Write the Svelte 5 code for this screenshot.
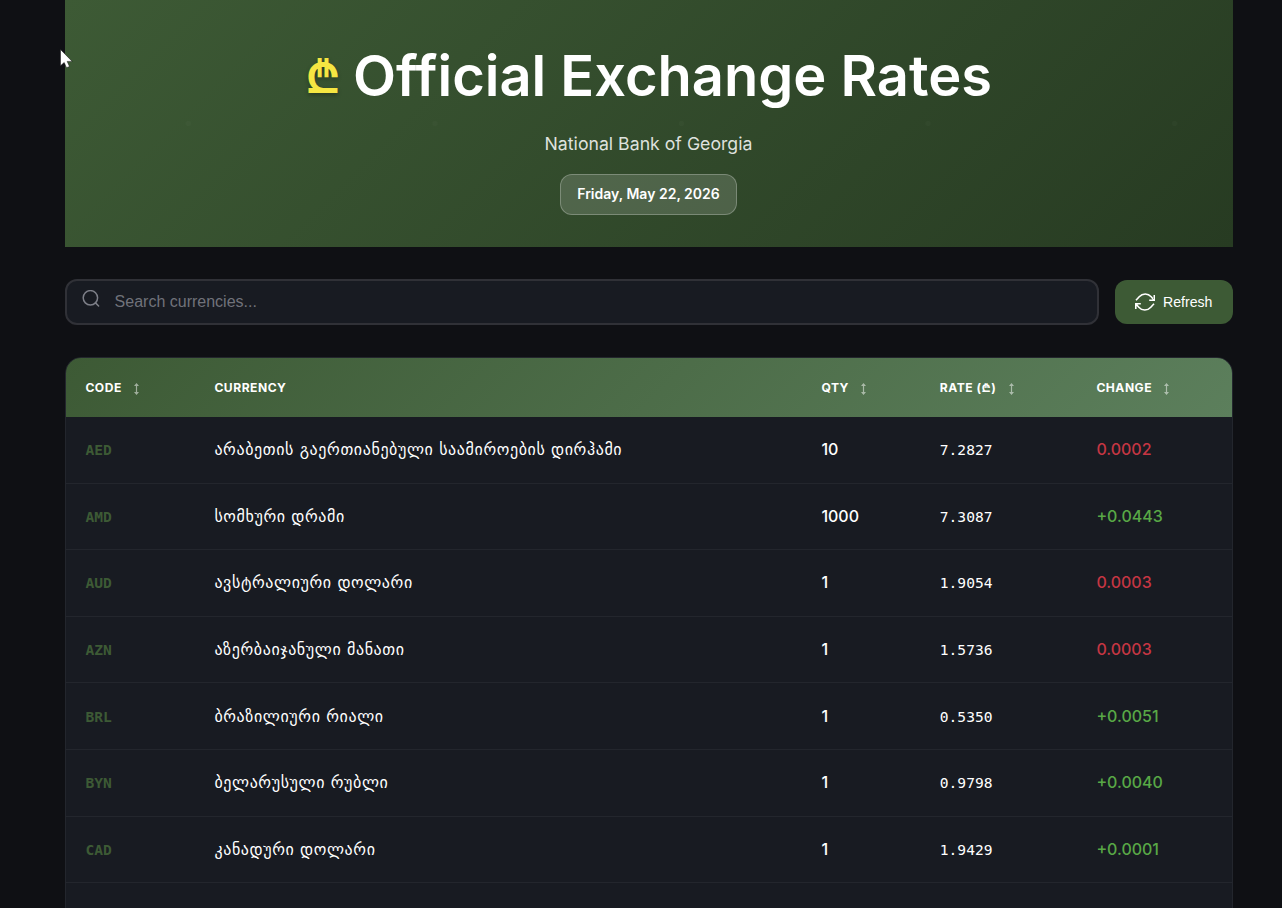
<script>
	let search = $state('');
	let sortKey = $state('');
	let ascending = $state(true);

	const columns = [
		{ key: 'code', label: 'Code', sortable: true },
		{ key: 'name', label: 'Currency', sortable: false },
		{ key: 'quantity', label: 'Qty', sortable: true },
		{ key: 'rate', label: 'Rate (₾)', sortable: true },
		{ key: 'diff', label: 'Change', sortable: true }
	];

	const currencies = [
		{ code: 'AED', name: 'არაბეთის გაერთიანებული საამიროების დირჰამი', quantity: 10, rate: 7.2827, diff: -0.0002 },
		{ code: 'AMD', name: 'სომხური დრამი', quantity: 1000, rate: 7.3087, diff: 0.0443 },
		{ code: 'AUD', name: 'ავსტრალიური დოლარი', quantity: 1, rate: 1.9054, diff: -0.0003 },
		{ code: 'AZN', name: 'აზერბაიჯანული მანათი', quantity: 1, rate: 1.5736, diff: -0.0003 },
		{ code: 'BRL', name: 'ბრაზილიური რიალი', quantity: 1, rate: 0.535, diff: 0.0051 },
		{ code: 'BYN', name: 'ბელარუსული რუბლი', quantity: 1, rate: 0.9798, diff: 0.004 },
		{ code: 'CAD', name: 'კანადური დოლარი', quantity: 1, rate: 1.9429, diff: 0.0001 }
	];

	let rows = $derived.by(() => {
		const term = search.toLowerCase();
		const found = currencies.filter(c => c.code.toLowerCase().includes(term) || c.name.includes(term));
		if (sortKey) {
			found.sort((a, b) => (a[sortKey] > b[sortKey] ? 1 : -1) * (ascending ? 1 : -1));
		}
		return found;
	});

	function sortBy(column) {
		if (!column.sortable) return;
		ascending = sortKey === column.key ? !ascending : true;
		sortKey = column.key;
	}

	function refresh() {
		search = '';
		sortKey = '';
	}
</script>

<div class="container">
	<header>
		<h1><span class="lari">₾</span><span class="heading">Official Exchange Rates</span></h1>
		<p class="subtitle">National Bank of Georgia</p>
		<div class="date">Friday, May 22, 2026</div>
	</header>

	<div class="controls">
		<div class="search">
			<svg width="18" height="18" viewBox="0 0 18 18" fill="none" stroke="currentColor" stroke-width="1.5">
				<circle cx="8.4" cy="7.8" r="7.2" />
				<path d="M13.5 12.9l3.1 3.1" stroke-linecap="round" />
			</svg>
			<input type="text" placeholder="Search currencies..." bind:value={search}>
		</div>
		<button class="refresh" onclick={refresh}>
			<svg width="20" height="18" viewBox="0 0 20 18" fill="none" stroke="currentColor" stroke-width="1.6">
				<path d="M1 7.3L4.2 3.8C7.6.1 12.9.1 16.2 3.8L18.8 6.8M19.3 2V7.2H14.2" />
				<path d="M19 10.7L15.8 14.2C12.4 17.9 7.1 17.9 3.8 14.2L1.2 11.2M.8 16V10.8H5.8" />
			</svg>
			<span>Refresh</span>
		</button>
	</div>

	<div class="table-wrap">
		<table>
			<colgroup>
				<col class="col-code">
				<col class="col-name">
				<col class="col-qty">
				<col class="col-rate">
				<col class="col-change">
			</colgroup>
			<thead>
				<tr>
					{#each columns as column (column.key)}
						<th onclick={() => sortBy(column)}>
							<span class="label">{column.label}</span>
							{#if column.sortable}
								<svg class="sort" width="7" height="12" viewBox="0 0 7 12">
									<path d="M3.5 1.5v9" stroke="currentColor" stroke-width="1.2" />
									<path d="M3.5 0L6 3H1zM3.5 12L6 9H1z" fill="currentColor" />
								</svg>
							{/if}
						</th>
					{/each}
				</tr>
			</thead>
			<tbody>
				{#each rows as row (row.code)}
					<tr>
						<td class="code">{row.code}</td>
						<td class="name">{row.name}</td>
						<td class="qty">{row.quantity}</td>
						<td class="rate">{row.rate.toFixed(4)}</td>
						<td class="change" class:down={row.diff < 0}>
							{row.diff > 0 ? '+' : ''}{Math.abs(row.diff).toFixed(4)}
						</td>
					</tr>
				{/each}
			</tbody>
		</table>
	</div>
</div>

<svg class="cursor" width="13" height="20" viewBox="0 0 13 20">
	<path d="M.5.5v16.2l3.7-3.2 2.3 5.2 3-1.2-2.3-5.1h5z" fill="#fff" stroke="#111" stroke-width=".5" />
</svg>

<style>
	:global(body) {
		background: #0f1014;
		overflow: hidden;
	}

	.container {
		width: 1168px;
		height: 908px;
		margin-left: 65px;
		font-family: Inter, "DejaVu Sans", sans-serif;
		color: #fff;
	}

	header {
		box-sizing: border-box;
		height: 246.6px;
		padding: 43px 1px 0 0;
		text-align: center;
		background:
			radial-gradient(circle, rgba(255, 255, 255, 0.018) 2.4px, transparent 3px) 0 0 / 246.6px 246.6px,
			linear-gradient(135deg, #3d5a35 0%, #273b22 100%);
	}

	h1 {
		display: flex;
		justify-content: center;
		gap: 12px;
		margin: 0;
		font-size: 56px;
		font-weight: 600;
		line-height: 67px;
	}

	.lari {
		color: #f5e642;
		font-size: 48px;
		font-weight: 600;
		line-height: 66px;
		text-shadow: 0 2px 4px rgba(0, 0, 0, 0.3);
	}

	.subtitle {
		margin: 19px 0 16px;
		font-size: 17.7px;
		line-height: 29px;
		color: rgba(255, 255, 255, 0.85);
	}

	.date {
		display: inline-block;
		padding: 7px 16px 9px;
		border: 1px solid rgba(255, 255, 255, 0.25);
		border-radius: 12px;
		background: rgba(255, 255, 255, 0.15);
		font-size: 14px;
		font-weight: 600;
		line-height: 23px;
	}

	.controls {
		display: flex;
		align-items: center;
		gap: 16px;
		margin: 32.4px 0;
	}

	.search {
		display: flex;
		box-sizing: border-box;
		flex: 1;
		height: 46px;
		padding-left: 15px;
		border: 2px solid #303137;
		border-radius: 12px;
		background: #181b22;
		color: #7d7f88;
	}

	.search svg {
		margin-top: 9px;
	}

	input {
		flex: 1;
		margin-left: 14.6px;
		padding: 0;
		border: 0;
		outline: 0;
		background: none;
		color: #fff;
		font: 16px "Liberation Sans", sans-serif;
	}

	input::placeholder {
		color: #70727a;
	}

	.refresh {
		display: flex;
		align-items: center;
		gap: 8px;
		width: 118px;
		height: 44px;
		padding: 0 0 0 20px;
		border: 0;
		border-radius: 12px;
		background: #3d5a35;
		color: #fff;
		font: 14.1px "Liberation Sans", sans-serif;
	}

	.table-wrap {
		box-sizing: border-box;
		height: 560px;
		overflow: hidden;
		border: 1px solid #23262d;
		border-radius: 16px 16px 0 0;
		background: #181b22;
	}

	table {
		width: 100%;
		table-layout: fixed;
		border-collapse: separate;
		border-spacing: 0;
	}

	.col-code { width: 129px; }
	.col-name { width: 607px; }
	.col-qty { width: 118.4px; }
	.col-rate { width: 156.6px; }

	thead {
		background: linear-gradient(135deg, #3d5a35, #5c7f5c);
	}

	th {
		height: 58.6px;
		padding: 0 0 0 19.4px;
		font-size: 12.1px;
		font-weight: 700;
		letter-spacing: 0.5px;
		text-align: left;
		text-transform: uppercase;
		white-space: nowrap;
	}

	.sort {
		margin-left: 8px;
		vertical-align: -3px;
		opacity: 0.5;
	}

	td {
		box-sizing: border-box;
		height: 66.6px;
		padding: 0 0 0 19.4px;
		border-bottom: 1px solid #23262d;
		font-size: 16px;
	}

	.code {
		color: #3d5a35;
		font-family: "DejaVu Sans Mono", monospace;
		font-size: 14.6px;
		font-weight: 700;
	}

	.name {
		font-family: "DejaVu Sans", sans-serif;
		font-size: 16px;
		letter-spacing: 0.6px;
	}

	.qty,
	.change {
		padding-bottom: 1px;
		font-weight: 500;
	}

	.rate {
		font-family: "DejaVu Sans Mono", monospace;
		font-size: 14.6px;
	}

	.change {
		color: #58a846;
	}

	.down {
		color: #c53643;
	}

	.cursor {
		position: absolute;
		left: 60px;
		top: 49px;
	}
</style>
